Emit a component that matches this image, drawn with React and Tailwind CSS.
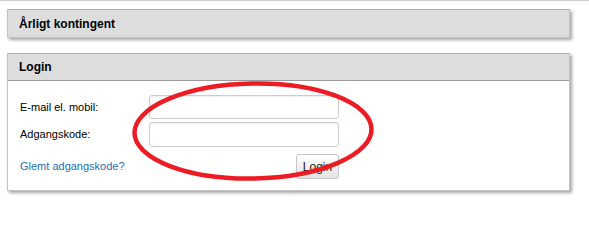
import React from 'react';

const Panel = ({ title, children }) => {
  return (
    <div className="border border-[#c4c4c4] border-t-[#b0b0b0] shadow-[2px_2px_3px_rgba(0,0,0,0.35)] bg-white">
      <div className={'bg-[#dddddd] h-[27px] flex items-center px-[11px] text-[12px] font-bold text-black ' + (children ? 'border-b border-[#9a9a9a]' : '')}>
        {title}
      </div>
      {children}
    </div>
  );
};

const App = () => {
  return (
    <div className="relative w-[589px] h-[210px] bg-white font-['Liberation_Sans',Arial,sans-serif]">
      <div className="h-px bg-[#cfcfcf]" />
      <div className="pl-[7px] pr-[19px] pt-[8px] flex flex-col gap-[15px]">
        <Panel title="Årligt kontingent" />
        <Panel title="Login">
          <div className="pt-[14px] pb-[11px] pl-[12px] grid grid-cols-[129px_190px] gap-y-[3px] items-center text-[11px] text-black">
            <label>E-mail el. mobil:</label>
            <input type="text" className="h-[24px] border border-[#cccccc] rounded-[3px] shadow-[inset_0_1px_1px_rgba(0,0,0,0.06)]" />
            <label>Adgangskode:</label>
            <input type="password" className="h-[25px] border border-[#cccccc] rounded-[3px] shadow-[inset_0_1px_1px_rgba(0,0,0,0.06)]" />
            <a href="#" className="text-[#2a6db0] mt-[4px]">Glemt adgangskode?</a>
            <div className="flex justify-end mt-[4px]">
              <button className="h-[25px] w-[43px] border border-[#c6c6c6] rounded-[3px] bg-gradient-to-b from-[#ffffff] to-[#e2e2e2] text-[12px] text-[#222]">
                Login
              </button>
            </div>
          </div>
        </Panel>
      </div>
      {/* red hand-drawn ring over the form */}
      <svg className="absolute left-[131px] top-[79px]" width="246" height="104" viewBox="0 0 246 104">
        <ellipse cx="122" cy="52" rx="118.5" ry="47.5" fill="none" stroke="#ec1c24" strokeWidth="4.5" transform="rotate(-1 122 52)" />
      </svg>
    </div>
  );
};

export default App;
